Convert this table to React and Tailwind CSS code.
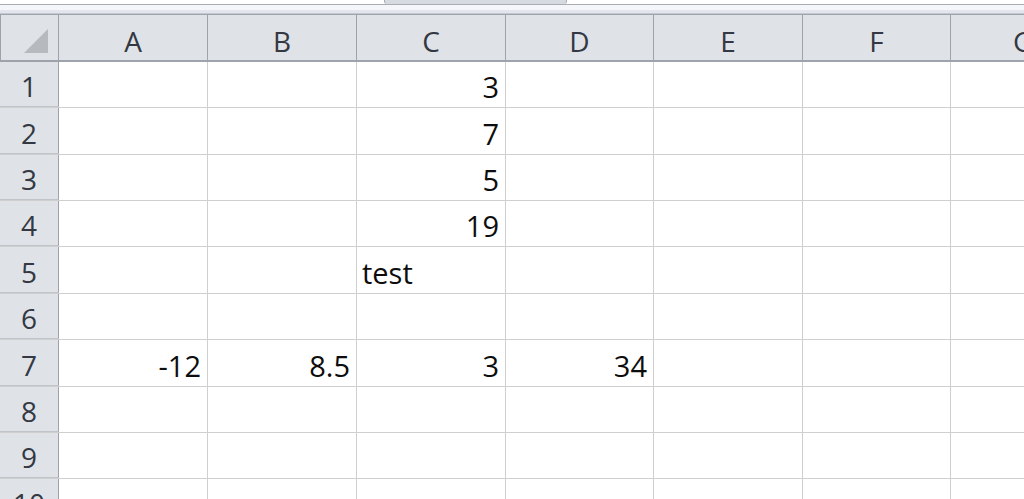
const columns = [
  { key: 'A', w: 'w-[149px]' },
  { key: 'B', w: 'w-[149px]' },
  { key: 'C', w: 'w-[149px]' },
  { key: 'D', w: 'w-[148px]' },
  { key: 'E', w: 'w-[149px]' },
  { key: 'F', w: 'w-[148px]' },
];

const rowHeights = ['h-[46px]', 'h-[47px]', 'h-[46px]', 'h-[46px]', 'h-[47px]', 'h-[46px]', 'h-[47px]', 'h-[46px]', 'h-[46px]', 'h-[46px]'];

// cell values per row; objects are left-aligned text
const data = {
  1: { C: '3' },
  2: { C: '7' },
  3: { C: '5' },
  4: { C: '19' },
  5: { C: { v: 'test', left: true } },
  7: { A: '-12', B: '8.5', C: '3', D: '34' },
};

function Cell({ value, w }) {
  const isText = value && typeof value === 'object';
  const text = isText ? value.v : value;
  return (
    <div
      className={`${w} shrink-0 h-full border-r border-[#cfcfcf] flex items-end pb-[3px] ${
        isText ? 'justify-start pl-[5px]' : 'justify-end pr-[6px]'
      }`}
    >
      {text && <span className="leading-none text-[29px] font-medium text-[#0d0d0d] pb-[3px]">{text}</span>}
    </div>
  );
}

export default function App() {
  return (
    <div className="w-[1024px] h-[499px] overflow-hidden bg-white font-['Open_Sans',sans-serif]">
      {/* top strip */}
      <div className="flex h-[4px]">
        <div className="w-[384px] bg-white" />
        <div className="w-[183px] bg-[#d7dae0] border-x border-[#a8acb3] rounded-b-[3px]" />
        <div className="flex-1 bg-white" />
      </div>
      <div className="h-[1px] bg-[#a9adb4]" />
      <div className="h-[5px] bg-[#f5f6fa]" />
      <div className="h-[3px] bg-[#e2e5ee]" />
      <div className="h-[1px] bg-[#c3c7ce]" />
      <div className="h-[1px] bg-[#9ea3ab]" />

      {/* column headers */}
      <div className="flex h-[47px] bg-[#dfe3e8] border-b-2 border-[#9ea3ab]">
        <div className="w-[59px] shrink-0 h-full border-r border-l border-[#9ea3ab] flex items-end justify-end pr-[10px] pb-[7px]">
          <svg width="24" height="24" viewBox="0 0 24 24">
            <polygon points="0,24 24,24 24,0" fill="#b6babf" />
          </svg>
        </div>
        {columns.map((c) => (
          <div
            key={c.key}
            className={`${c.w} shrink-0 h-full border-r border-[#9ea3ab] flex items-center justify-center pt-[6px]`}
          >
            <span className="leading-none text-[28px] font-medium text-[#333842]">{c.key}</span>
          </div>
        ))}
        <div className="flex-1 h-full flex items-center pl-[62px] pt-[6px]">
          <span className="leading-none text-[28px] font-medium text-[#333842]">G</span>
        </div>
      </div>

      {/* rows */}
      {rowHeights.map((h, i) => {
        const r = i + 1;
        const rowData = data[r] || {};
        return (
          <div key={r} className={`flex ${h} border-b border-[#cfcfcf]`}>
            <div className="w-[59px] shrink-0 h-full bg-[#dfe3e8] border-r border-[#9ea3ab] border-b border-b-[#c0c4ca] flex items-center justify-center pt-[4px]">
              <span className="leading-none text-[28px] font-medium text-[#333842]">{r}</span>
            </div>
            {columns.map((c) => (
              <Cell key={c.key} value={rowData[c.key]} w={c.w} />
            ))}
            <div className="flex-1 h-full" />
          </div>
        );
      })}
    </div>
  );
}
